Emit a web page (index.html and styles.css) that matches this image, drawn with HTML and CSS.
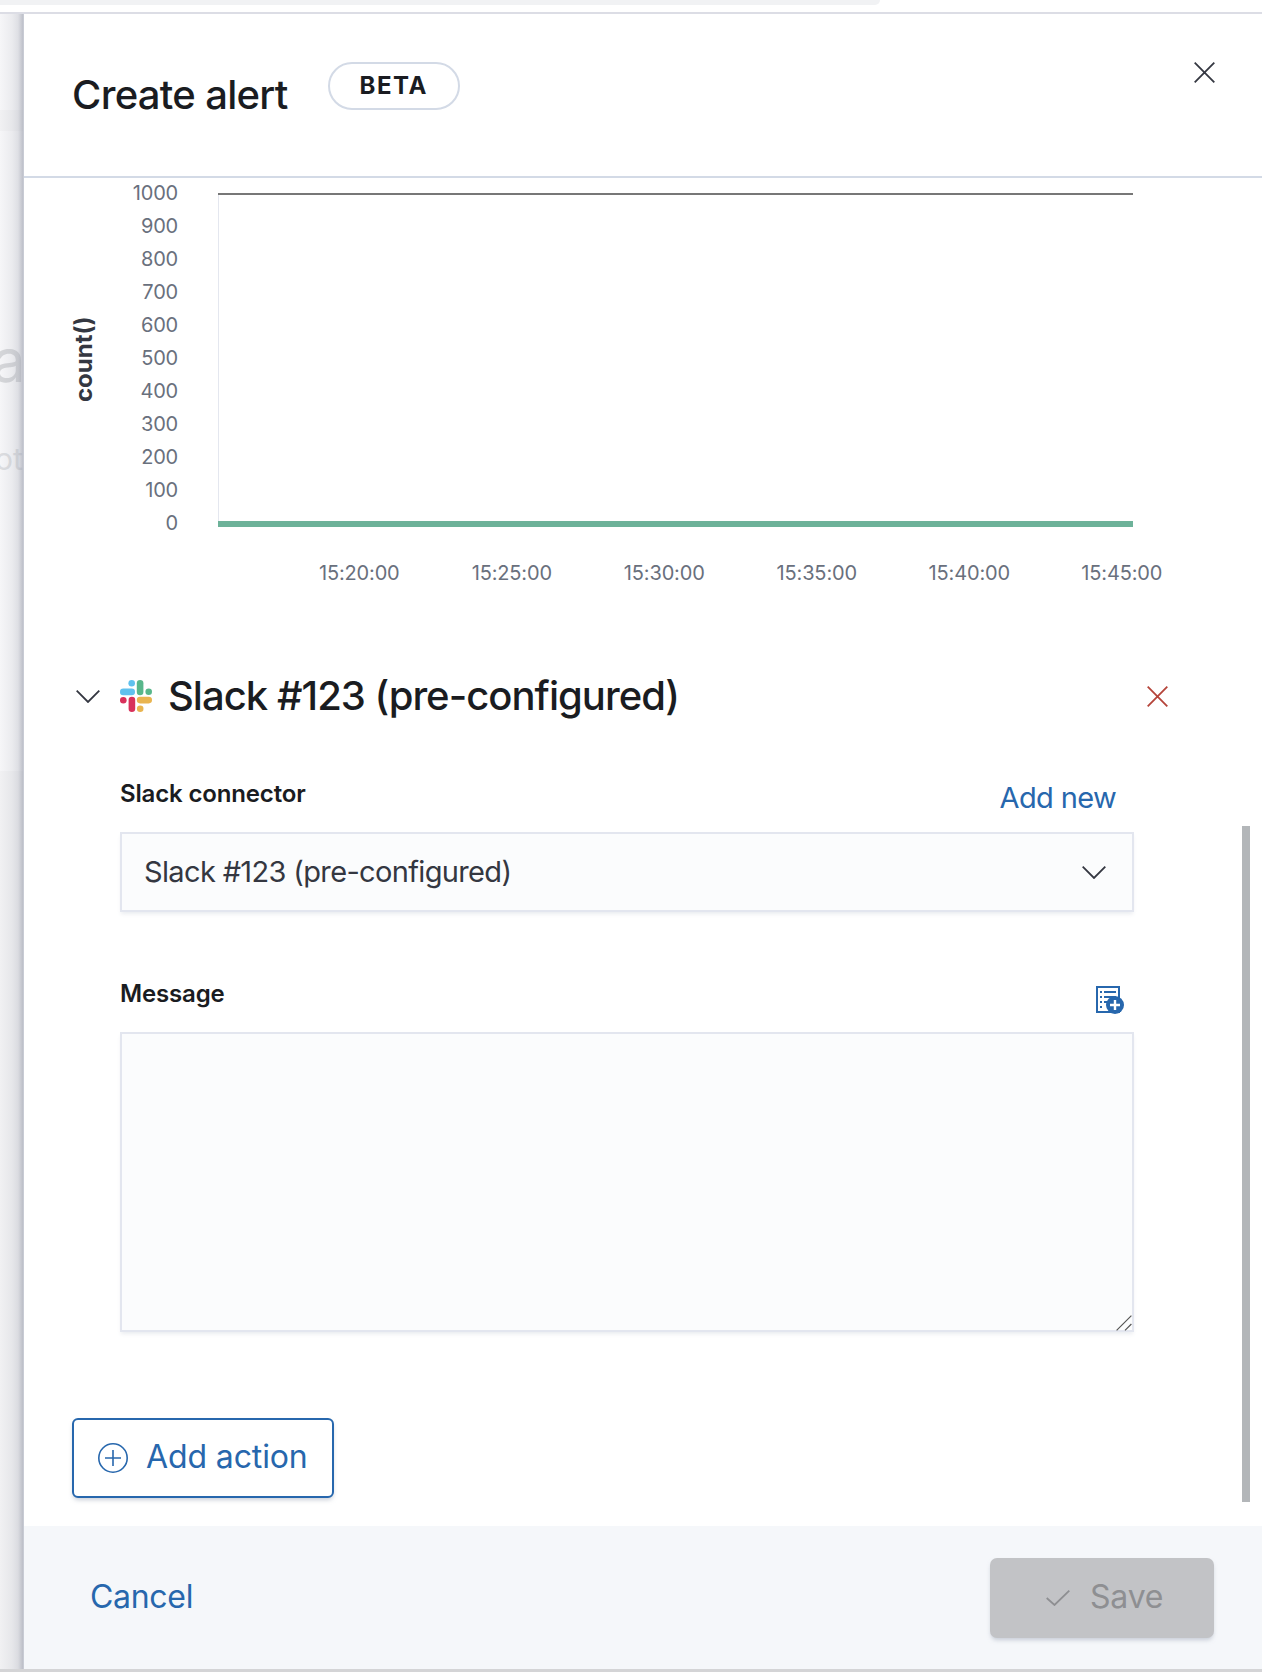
FILE: index.html
```html
<!DOCTYPE html>
<html lang="en">
<head>
<meta charset="utf-8">
<title>Create alert</title>
<link rel="stylesheet" href="styles.css">
</head>
<body>
<div class="topbar"><div class="topbar-pill"></div></div>
<div class="stage">
  <div class="backdrop">
    <span class="ghost-a">a</span>
    <span class="ghost-ot">ot</span>
  </div>
  <main class="flyout">
    <header class="fly-head">
      <h1 class="fly-title">Create alert</h1>
      <span class="beta">BETA</span>
      <svg class="close-icon" viewBox="0 0 21 21"><path d="M.7.7l19.6 19.6M20.3.7L.7 20.3"/></svg>
    </header>
    <section class="fly-body">
      <div class="chart-row">
        <div class="y-title">count()</div>
        <div class="y-ticks">
          <span>1000</span><span>900</span><span>800</span><span>700</span><span>600</span><span>500</span><span>400</span><span>300</span><span>200</span><span>100</span><span>0</span>
        </div>
        <div class="plot"><div class="plot-area"></div></div>
      </div>
      <div class="x-ticks">
        <span>15:20:00</span><span>15:25:00</span><span>15:30:00</span><span>15:35:00</span><span>15:40:00</span><span>15:45:00</span>
      </div>

      <div class="action-head">
        <svg class="chev" viewBox="0 0 24 13"><path d="M.7.7L12 12 23.3.7"/></svg>
        <svg class="slack" viewBox="0 0 32 32">
          <circle cx="11.7" cy="3.3" r="3.3" fill="#60c1ee"/><rect x="0" y="8.6" width="15" height="6.6" rx="3.3" fill="#60c1ee"/>
          <rect x="16.8" y="0" width="6.6" height="15.2" rx="3.3" fill="#58b78b"/><circle cx="28.7" cy="11.8" r="3.3" fill="#58b78b"/>
          <circle cx="3.3" cy="20.2" r="3.3" fill="#d8315b"/><rect x="8.6" y="16.8" width="6.6" height="15.2" rx="3.3" fill="#d8315b"/>
          <rect x="16.8" y="16.8" width="15.2" height="6.6" rx="3.3" fill="#e9b44f"/><circle cx="20.2" cy="28.7" r="3.3" fill="#e9b44f"/>
        </svg>
        <h2 class="action-title">Slack #123 (pre-configured)</h2>
        <svg class="del-icon" viewBox="0 0 21 21"><path d="M.7.7l19.6 19.6M20.3.7L.7 20.3"/></svg>
      </div>

      <div class="field">
        <div class="field-row">
          <label class="field-label">Slack connector</label>
          <a class="link add-new">Add new</a>
        </div>
        <div class="select">
          <span>Slack #123 (pre-configured)</span>
          <svg class="select-chev" viewBox="0 0 24 13"><path d="M.7.7L12 12 23.3.7"/></svg>
        </div>
      </div>

      <div class="field field-message">
        <div class="field-row">
          <label class="field-label">Message</label>
          <svg class="merge" viewBox="0 0 28 28">
            <rect x="1" y="1" width="22" height="25" fill="#fff" stroke="#2767ad" stroke-width="2"/>
            <path d="M4 6h2M8 6h12M4 11h2M8 11h12M4 16h2M8 16h6M4 21h2" stroke="#2767ad" stroke-width="2"/>
            <circle cx="19" cy="19" r="9" fill="#2767ad"/>
            <path d="M14 19h10M19 14v10" stroke="#fff" stroke-width="2.4"/>
          </svg>
        </div>
        <div class="textarea">
          <svg class="resizer" viewBox="0 0 16 16"><path d="M.6 15.4L15.4.6M9 15.4l6.4-6.4"/></svg>
        </div>
      </div>

      <button class="add-action" type="button">
        <svg class="plus-icon" viewBox="0 0 30 30"><circle cx="15" cy="15" r="14.2"/><path d="M15 7v16M7 15h16"/></svg>
        <span>Add action</span>
      </button>
      <div class="scrollbar"></div>
    </section>
    <footer class="fly-foot">
      <a class="link cancel">Cancel</a>
      <button class="save" type="button" disabled>
        <svg class="check" viewBox="0 0 24 16"><path d="M.7 8L8.5 15 23.3.7"/></svg>
        <span>Save</span>
      </button>
    </footer>
  </main>
</div>
<div class="bottombar"></div>
</body>
</html>
```
FILE: styles.css
```css
* { box-sizing: border-box; }
html, body { margin: 0; padding: 0; }
body {
  width: 1262px;
  height: 1672px;
  overflow: hidden;
  background: #fff;
  font-family: Inter, "Liberation Sans", sans-serif;
  color: #1a1c21;
  display: flex;
  flex-direction: column;
}
svg { display: block; fill: none; }

.topbar { height: 14px; border-bottom: 2px solid #dcdde5; flex: none; }
.topbar-pill { width: 880px; height: 5px; background: #f1f2f4; border-bottom-right-radius: 10px; }
.stage { flex: 1; display: flex; min-height: 0; }
.bottombar { height: 3px; background: #d4d4d6; flex: none; }

.backdrop {
  width: 23px;
  flex: none;
  position: relative;
  overflow: hidden;
  background: linear-gradient(180deg, #f6f6f8 0, #f6f6f8 96px, #f1f1f3 96px, #f1f1f3 117px, #f6f6f8 117px, #f6f6f8 757px, #f1f1f3 757px);
}
.backdrop::after {
  content: "";
  position: absolute;
  inset: 0;
  background: linear-gradient(90deg, rgba(152,156,170,0) 0, rgba(152,156,170,.12) 12px, rgba(152,156,170,.25) 18px, rgba(152,156,170,.6) 23px);
}
.ghost-a { position: absolute; left: -8px; top: 311px; font-size: 60px; line-height: 70px; color: #d5d6d9; }
.ghost-ot { position: absolute; left: -5px; top: 427px; font-size: 30px; line-height: 36px; color: #dcdde0; }

.flyout {
  flex: 1;
  min-width: 0;
  border-left: 1px solid #c8cbd4;
  display: flex;
  flex-direction: column;
}
.fly-head {
  height: 164px;
  flex: none;
  border-bottom: 2px solid #d3dae6;
  display: flex;
  align-items: flex-start;
  padding-left: 48px;
  position: relative;
}
.fly-title { margin: 57px 0 0; font-size: 40px; line-height: 48px; font-weight: 500; letter-spacing: -.7px; }
.beta {
  margin: 48px 0 0 40px;
  width: 132px;
  height: 48px;
  border: 2px solid #d3dae6;
  border-radius: 24px;
  text-align: center;
  font-size: 24px;
  line-height: 44px;
  font-weight: 700;
  letter-spacing: 1.5px;
}
.close-icon { position: absolute; left: 1170px; top: 48px; width: 21px; height: 21px; stroke: #343741; stroke-width: 1.8; }

.fly-body { flex: 1; min-height: 0; position: relative; overflow: hidden; }
.chart-row { display: flex; padding-left: 48px; height: 349px; }
.y-title {
  width: 24px;
  height: 349px;
  margin-top: 7px;
  writing-mode: vertical-rl;
  transform: rotate(180deg);
  text-align: center;
  font-size: 24px;
  line-height: 24px;
  font-weight: 700;
  color: #343741;
}
.y-ticks { width: 82px; margin-top: -1px; display: flex; flex-direction: column; align-items: flex-end; color: #69707d; font-size: 20px; letter-spacing: -.2px; }
.y-ticks span { height: 33px; line-height: 33px; }
.plot {
  margin: 15px 0 0 40px;
  width: 915px;
  height: 334px;
  display: flex;
  flex-direction: column;
  border-top: 2px solid #777;
  border-bottom: 6px solid #6db299;
}
.plot-area { flex: 1; border-left: 1px solid #e4e7ef; }
.x-ticks {
  margin: 34px 0 0 259px;
  display: grid;
  grid-template-columns: repeat(6, 152.5px);
  text-align: center;
  color: #69707d;
  font-size: 20px;
  line-height: 24px;
  letter-spacing: -.15px;
}

.action-head { display: flex; align-items: center; height: 48px; margin-top: 87px; padding-left: 52px; }
.chev { width: 24px; height: 13px; stroke: #343741; stroke-width: 1.8; }
.slack { width: 32px; height: 32px; margin-left: 20px; }
.action-title { margin: 0 0 0 16px; font-size: 40px; line-height: 48px; font-weight: 500; letter-spacing: -.97px; }
.del-icon { margin-left: auto; margin-right: 94px; width: 21px; height: 21px; stroke: #b5443a; stroke-width: 1.8; }

.field { margin: 56px 0 0 96px; width: 1014px; }
.field-message { margin-top: 64px; }
.field-row { height: 56px; display: flex; justify-content: space-between; align-items: flex-start; }
.field-label { font-size: 24px; line-height: 30px; font-weight: 600; margin-top: 3px; letter-spacing: -.15px; }
.link { color: #2767ad; }
.add-new { font-size: 29px; line-height: 36px; margin: 4px 18px 0 0; letter-spacing: -.65px; }
.select {
  height: 80px;
  background: #fbfcfd;
  border: 2px solid #e3e6ef;
  box-shadow: 0 3px 4px -1px rgba(152,162,179,.2);
  display: flex;
  align-items: center;
  justify-content: space-between;
  padding: 0 26px 2px 22px;
  font-size: 29px;
  letter-spacing: -.65px;
  color: #343741;
}
.select-chev { width: 24px; height: 13px; margin-top: 2px; stroke: #343741; stroke-width: 1.8; }
.merge { width: 28px; height: 28px; margin: 10px 10px 0 0; }
.textarea {
  height: 300px;
  background: #fbfcfd;
  border: 2px solid #e3e6ef;
  box-shadow: 0 3px 4px -1px rgba(152,162,179,.2);
  position: relative;
}
.resizer { position: absolute; right: 0; bottom: -1px; width: 16px; height: 16px; stroke: #555; stroke-width: 1.2; }

.add-action {
  margin: 86px 0 0 48px;
  width: 262px;
  height: 80px;
  display: flex;
  align-items: center;
  gap: 18px;
  padding: 0 0 0 24px;
  background: #fff;
  border: 2px solid #2767ad;
  border-radius: 6px;
  box-shadow: 0 3px 4px -1px rgba(152,162,179,.5);
  color: #2767ad;
  font: 400 32px/40px Inter, "Liberation Sans", sans-serif;
  letter-spacing: -.12px;
}
.add-action span { margin-top: -2px; }
.plus-icon { width: 30px; height: 30px; stroke: #2767ad; stroke-width: 1.6; }
.scrollbar { position: absolute; left: 1218px; top: 648px; width: 8px; height: 676px; background: #b3b6b9; }

.fly-foot {
  height: 143px;
  flex: none;
  background: #f5f7fa;
  display: flex;
  justify-content: space-between;
  align-items: flex-start;
  padding: 32px 48px 0 66px;
}
.cancel { font-size: 32px; line-height: 40px; margin-top: 19px; letter-spacing: -.3px; }
.save {
  width: 224px;
  height: 80px;
  display: flex;
  align-items: center;
  gap: 20px;
  padding: 0 0 0 56px;
  background: #c2c3c6;
  border: 0;
  border-radius: 7px;
  box-shadow: 0 3px 4px -1px rgba(152,162,179,.5);
  color: #8e8f92;
  font: 400 32px/40px Inter, "Liberation Sans", sans-serif;
  letter-spacing: -.2px;
}
.save span { margin-top: -2px; }
.check { width: 24px; height: 16px; stroke: #8e8f92; stroke-width: 1.8; }
```
